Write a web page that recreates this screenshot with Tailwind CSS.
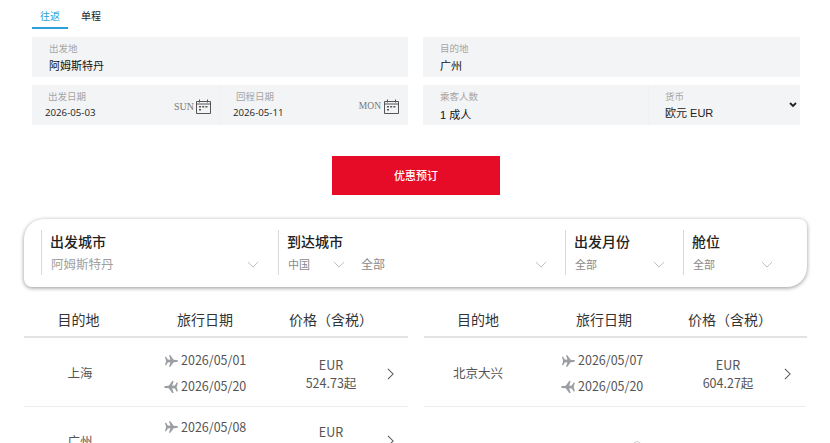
<!DOCTYPE html>
<html lang="zh">
<head>
    <meta charset="UTF-8">
    <title>优惠预订</title>
    <script src="https://cdn.jsdelivr.net/npm/@tailwindcss/browser@4"></script>
</head>
<body class="bg-white h-[443px] overflow-hidden relative font-['Noto_Sans_CJK_SC',sans-serif]">
    <svg class="hidden">
        <symbol id="cal" viewBox="0 0 15 15">
            <path d="M.5 2.5h14v12H.5zM.5 5h14M3.5.5v3M11.5.5v3" fill="none" stroke="#555" stroke-width="1"/>
            <path d="M3 7h2v1.6H3zM6.2 7h2v1.6H6.2zM9.4 7h2v1.6H9.4zM3 10h2v1.6H3z" fill="#555"/>
        </symbol>
        <symbol id="down" viewBox="0 0 14 8">
            <path d="M1 1l6 6 6-6" fill="none" stroke="#b4b4b4" stroke-width="1"/>
        </symbol>
        <symbol id="right" viewBox="0 0 8 14">
            <path d="M1 1l6 6-6 6" fill="none" stroke="#555" stroke-width="1.2"/>
        </symbol>
        <symbol id="dep" viewBox="0 0 16 14">
            <path d="M0 2.2l1.2-.6 2.3 3.6 3.2.3L4.9 0h1.7l4 5.6 3.4.2c1.2.1 2 .6 2 1.2s-.8 1.1-2 1.2l-3.4.2-4 5.6H4.9l1.8-5.5-3.2.3-2.3 3.6-1.2-.6L1.4 7z" fill="#9a9ea3"/>
        </symbol>
    </svg>

    <!-- search form -->
    <div class="px-[32px] pr-[30px]">
        <div class="flex text-[10px] h-[29px]">
            <div class="w-[36px] h-[29px] pt-[8px] text-center text-[#2a9fd8] border-b-2 border-[#2a9fd8] leading-[16px]">往返</div>
            <div class="w-[46px] h-[29px] pt-[8px] text-center text-[#222] leading-[16px]">单程</div>
        </div>
        <div class="flex justify-between mt-[8px] font-['Liberation_Sans','Noto_Sans_CJK_SC',sans-serif]">
            <div class="w-[376px] h-[40px] bg-[#f3f4f6] pl-[17px] pt-[5px]">
                <div class="text-[9.5px] leading-[14px] text-[#a5a5a5]">出发地</div>
                <div class="text-[11px] leading-[16px] mt-[2px] text-[#111]">阿姆斯特丹</div>
            </div>
            <div class="w-[377px] h-[40px] bg-[#f3f4f6] pl-[17px] pt-[5px]">
                <div class="text-[9.5px] leading-[14px] text-[#a5a5a5]">目的地</div>
                <div class="text-[11px] leading-[16px] mt-[2px] text-[#111]">广州</div>
            </div>
        </div>
        <div class="flex justify-between mt-[8px] font-['Liberation_Sans','Noto_Sans_CJK_SC',sans-serif]">
            <div class="w-[376px] h-[40px] bg-[#f3f4f6] flex">
                <div class="w-[188px] border-r border-[#eff0f2] pl-[13px] pr-[8px] pt-[5px] flex justify-between">
                    <div>
                        <div class="text-[9.5px] leading-[14px] pl-[3px] text-[#a5a5a5]">出发日期</div>
                        <div class="text-[9.7px] leading-[16px] mt-[1px] text-[#222] font-['Open_Sans',sans-serif]">2026-05-03</div>
                    </div>
                    <div class="flex items-center gap-[2px] h-[15px] mt-[9px]">
                        <span class="text-[10px] text-[#777] font-['Liberation_Serif',serif]">SUN</span>
                        <svg class="w-[15px] h-[15px]"><use href="#cal"/></svg>
                    </div>
                </div>
                <div class="flex-1 pl-[13px] pr-[9px] pt-[5px] flex justify-between">
                    <div>
                        <div class="text-[9.5px] leading-[14px] pl-[3px] text-[#a5a5a5]">回程日期</div>
                        <div class="text-[9.7px] leading-[16px] mt-[1px] text-[#222] font-['Open_Sans',sans-serif]">2026-05-11</div>
                    </div>
                    <div class="flex items-center gap-[3px] h-[15px] mt-[9px]">
                        <span class="text-[9.5px] text-[#777] font-['Liberation_Serif',serif]">MON</span>
                        <svg class="w-[15px] h-[15px]"><use href="#cal"/></svg>
                    </div>
                </div>
            </div>
            <div class="w-[377px] h-[40px] bg-[#f3f4f6] flex">
                <div class="w-[226px] border-r border-[#eff0f2] pl-[17px] pt-[5px]">
                    <div class="text-[9.5px] leading-[14px] text-[#a5a5a5]">乘客人数</div>
                    <div class="text-[11px] leading-[16px] mt-[3px] text-[#111]">1 成人</div>
                </div>
                <div class="flex-1 pl-[16px] pr-[3px] pt-[5px] relative">
                    <div class="text-[9.5px] leading-[14px] text-[#a5a5a5]">货币</div>
                    <div class="text-[11px] leading-[16px] mt-[1px] text-[#222]">欧元 EUR</div>
                    <svg class="absolute right-[3px] top-[17px] w-[8px] h-[6px]" viewBox="0 0 8 6"><path d="M1 1l3 3 3-3" fill="none" stroke="#222" stroke-width="1.8"/></svg>
                </div>
            </div>
        </div>
        <div class="flex justify-center mt-[31px]">
            <button class="w-[168px] h-[39px] bg-[#e60c27] text-white text-[11px] font-medium">优惠预订</button>
        </div>
    </div>

    <!-- filters -->
    <div class="ml-[24px] w-[783px] h-[68px] mt-[24px] bg-white rounded-tl-[20px] rounded-br-[20px] rounded-tr-[8px] rounded-bl-[8px] shadow-[0_1px_4px_rgba(0,0,0,0.42)] flex pl-[17px] pt-[11px]">
        <div class="w-[237px] h-[45px] border-l border-[#d8d8d8] pl-[8px] pr-[19px]">
            <div class="text-[14px] leading-[22px] font-medium text-[#222]">出发城市</div>
            <div class="flex justify-between items-center mt-[2px] text-[12.5px] leading-[20px] text-[#a0a0a0]">
                <span class="ml-[1px]">阿姆斯特丹</span>
                <svg class="w-[12px] h-[7px]"><use href="#down"/></svg>
            </div>
        </div>
        <div class="w-[287px] h-[45px] border-l border-[#d8d8d8] pl-[9px] pr-[18px]">
            <div class="text-[14px] leading-[22px] font-medium text-[#222] -ml-[1px]">到达城市</div>
            <div class="flex items-center mt-[2px] text-[11px] leading-[20px] text-[#8a8a8a]">
                <span class="w-[45px]">中国</span>
                <svg class="w-[12px] h-[7px]"><use href="#down"/></svg>
                <span class="ml-[16px] text-[12px] flex-1">全部</span>
                <svg class="w-[12px] h-[7px]"><use href="#down"/></svg>
            </div>
        </div>
        <div class="w-[118px] h-[45px] border-l border-[#d8d8d8] pl-[9px] pr-[18px]">
            <div class="text-[14px] leading-[22px] font-medium text-[#222] -ml-[1px]">出发月份</div>
            <div class="flex justify-between items-center mt-[2px] text-[11px] leading-[20px] text-[#8a8a8a]">
                <span>全部</span>
                <svg class="w-[12px] h-[7px]"><use href="#down"/></svg>
            </div>
        </div>
        <div class="w-[100px] h-[45px] border-l border-[#d8d8d8] pl-[9px] pr-[10px]">
            <div class="text-[14px] leading-[22px] font-medium text-[#222] -ml-[1px]">舱位</div>
            <div class="flex justify-between items-center mt-[2px] text-[11px] leading-[20px] text-[#8a8a8a]">
                <span>全部</span>
                <svg class="w-[12px] h-[7px]"><use href="#down"/></svg>
            </div>
        </div>
    </div>

    <!-- fare tables -->
    <div class="ml-[24px] w-[783px] mt-[21px] flex justify-between text-[#555]">
        <div class="w-[384px]">
            <div class="flex h-[30px] border-b-2 border-[#e3e3e3] text-[14px] leading-[22px] text-[#333]">
                <div class="w-[109px] text-center">目的地</div>
                <div class="w-[144px] text-center">旅行日期</div>
                <div class="w-[82px] ml-[12px] text-center whitespace-nowrap">价格（含税）</div>
            </div>
            <div class="flex items-center h-[69px] pt-[3px] border-b border-[#ececec] text-[12.5px]">
                <div class="w-[112px] text-center">上海</div>
                <div class="w-[135px]">
                    <div class="flex items-center pl-[29px] h-[25px]"><svg class="w-[13px] h-[12px]"><use href="#dep"/></svg><span class="ml-[3px]">2026/05/01</span></div>
                    <div class="flex items-center pl-[28px] h-[25px] mt-[1px]"><svg class="w-[14px] h-[12px] rotate-180"><use href="#dep"/></svg><span class="ml-[3px]">2026/05/20</span></div>
                </div>
                <div class="w-[96px] ml-[12px] text-center leading-[18px]">EUR<br>524.73起</div>
                <svg class="w-[7px] h-[12px] ml-[8px]"><use href="#right"/></svg>
            </div>
            <div class="flex items-center h-[69px] pb-[1px] text-[12.5px]">
                <div class="w-[112px] text-center">广州</div>
                <div class="w-[135px] -mt-[2px]">
                    <div class="flex items-center pl-[29px] h-[25px]"><svg class="w-[13px] h-[12px]"><use href="#dep"/></svg><span class="ml-[3px]">2026/05/08</span></div>
                    <div class="flex items-center pl-[28px] h-[25px] mt-[1px]"><svg class="w-[14px] h-[12px] rotate-180"><use href="#dep"/></svg><span class="ml-[3px]">2026/05/20</span></div>
                </div>
                <div class="w-[96px] ml-[12px] text-center leading-[18px]">EUR<br>524.73起</div>
                <svg class="w-[7px] h-[12px] ml-[8px]"><use href="#right"/></svg>
            </div>
        </div>
        <div class="w-[383px]">
            <div class="flex h-[30px] border-b-2 border-[#e3e3e3] text-[14px] leading-[22px] text-[#333]">
                <div class="w-[108px] text-center">目的地</div>
                <div class="w-[144px] text-center">旅行日期</div>
                <div class="w-[82px] ml-[12px] text-center whitespace-nowrap">价格（含税）</div>
            </div>
            <div class="flex items-center h-[69px] pt-[3px] border-b border-[#ececec] text-[12.5px] w-[382px]">
                <div class="w-[108px] text-center">北京大兴</div>
                <div class="w-[135px]">
                    <div class="flex items-center pl-[30px] h-[25px]"><svg class="w-[13px] h-[12px]"><use href="#dep"/></svg><span class="ml-[3px]">2026/05/07</span></div>
                    <div class="flex items-center pl-[29px] h-[25px] mt-[1px]"><svg class="w-[14px] h-[12px] rotate-180"><use href="#dep"/></svg><span class="ml-[3px]">2026/05/20</span></div>
                </div>
                <div class="w-[96px] ml-[13px] text-center leading-[18px]">EUR<br>604.27起</div>
                <svg class="w-[7px] h-[12px] ml-[8px]"><use href="#right"/></svg>
            </div>
        </div>
    </div>

    <!-- loading spinner just showing at the bottom edge -->
    <div class="absolute left-[633px] top-[441px] w-[8px] h-[8px] rounded-full border border-[#d0d0d0]"></div>
</body>
</html>
